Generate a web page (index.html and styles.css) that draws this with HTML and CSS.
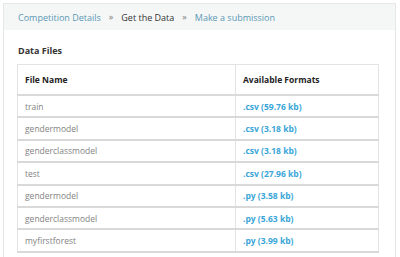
FILE: index.html
```html
<!DOCTYPE html>
<html>
<head>
<meta charset="utf-8">
<link rel="stylesheet" href="styles.css">
</head>
<body>
<div class="panel">
  <nav class="crumbs">
    <a class="crumb-link" href="#">Competition Details</a>
    <span class="sep">»</span>
    <span class="crumb-current">Get the Data</span>
    <span class="sep">»</span>
    <a class="crumb-link" href="#">Make a submission</a>
  </nav>
  <div class="content">
    <h2 class="title">Data Files</h2>
    <table class="files">
      <thead>
        <tr><th class="col-name">File Name</th><th>Available Formats</th></tr>
      </thead>
      <tbody>
        <tr><td>train</td><td><a href="#">.csv (59.76 kb)</a></td></tr>
        <tr><td>gendermodel</td><td><a href="#">.csv (3.18 kb)</a></td></tr>
        <tr><td>genderclassmodel</td><td><a href="#">.csv (3.18 kb)</a></td></tr>
        <tr><td>test</td><td><a href="#">.csv (27.96 kb)</a></td></tr>
        <tr><td>gendermodel</td><td><a href="#">.py (3.58 kb)</a></td></tr>
        <tr><td>genderclassmodel</td><td><a href="#">.py (5.63 kb)</a></td></tr>
        <tr><td>myfirstforest</td><td><a href="#">.py (3.99 kb)</a></td></tr>
      </tbody>
    </table>
  </div>
</div>
</body>
</html>
```
FILE: styles.css
```css
html, body {
  margin: 0;
  padding: 0;
  background: #ffffff;
}

body {
  font-family: "Open Sans", "Liberation Sans", sans-serif;
  overflow: hidden;
}

.panel {
  margin: 3px 4px 0 3px;
  border: 1px solid #e6e8e8;
  border-bottom: none;
  background: #fff;
  height: 260px;
}

.crumbs {
  height: 26px;
  background: #f5f7f7;
  display: flex;
  align-items: center;
  padding-left: 14px;
  font-size: 9px;
  gap: 6px;
}

.crumb-link {
  color: #5b98b4;
  text-decoration: none;
}

.sep {
  color: #7a7a7a;
  font-size: 9px;
  line-height: 1;
  padding: 0 2px 1px;
}

.crumb-current {
  color: #333;
}

.content {
  padding: 14px 16px 0 13px;
}

.title {
  margin: 0 0 7px 1px;
  font-size: 9px;
  font-weight: 700;
  color: #333;
  line-height: 13px;
}

.files {
  width: 362px;
  border-collapse: collapse;
  font-size: 8.5px;
}

.files th,
.files td {
  text-align: left;
  border-left: 1px solid #e3e3e3;
  border-right: 1px solid #e3e3e3;
  padding: 0 0 0 7px;
}

.files th {
  height: 29px;
  color: #222;
  font-weight: 700;
  border-top: 1px solid #e3e3e3;
  border-bottom: 2px solid #dadada;
}

.files .col-name {
  width: 210px;
}

.files td {
  height: 20.4px;
  color: #838383;
  border-bottom: 2px solid #d9d9d9;
}

.files td a {
  color: #3aa6d8;
  font-weight: 700;
  text-decoration: none;
}
```
